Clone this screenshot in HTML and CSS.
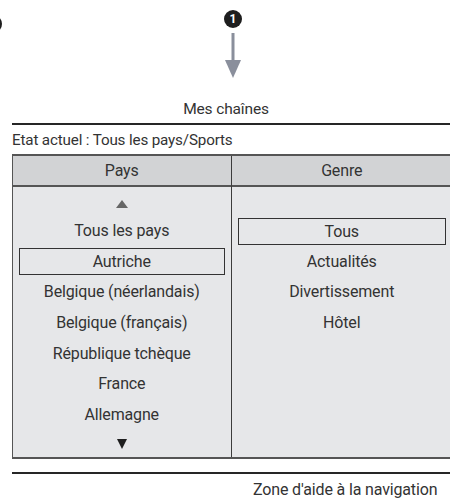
FILE: index.html
```html
<!DOCTYPE html>
<html lang="fr">
<head>
<meta charset="utf-8">
<title>Mes chaînes</title>
<link rel="stylesheet" href="styles.css">
</head>
<body>
<div class="page">
  <div class="badge-edge"></div>
  <div class="pointer">
    <div class="badge">1</div>
    <svg class="arrow" width="18" height="46" viewBox="0 0 18 46">
      <rect x="7.5" y="0" width="3" height="28" fill="#8a8f9c"/>
      <polygon points="1,27 17,27 9,45" fill="#8a8f9c"/>
    </svg>
  </div>
  <div class="title">Mes chaînes</div>
  <div class="frame">
    <div class="status">Etat actuel : Tous les pays/Sports</div>
    <div class="table">
      <div class="col">
        <div class="head">Pays</div>
        <div class="list">
          <div class="row tri"><i class="up"></i></div>
          <div class="row">Tous les pays</div>
          <div class="row sel"><span>Autriche</span></div>
          <div class="row">Belgique (néerlandais)</div>
          <div class="row">Belgique (français)</div>
          <div class="row">République tchèque</div>
          <div class="row">France</div>
          <div class="row">Allemagne</div>
          <div class="row tri dn"><i class="down"></i></div>
        </div>
      </div>
      <div class="col second">
        <div class="head">Genre</div>
        <div class="list">
          <div class="row tri"></div>
          <div class="row sel"><span>Tous</span></div>
          <div class="row">Actualités</div>
          <div class="row">Divertissement</div>
          <div class="row">Hôtel</div>
        </div>
      </div>
    </div>
    <div class="foot">Zone d'aide à la navigation</div>
  </div>
</div>
</body>
</html>
```
FILE: styles.css
```css
* { box-sizing: border-box; }
html, body { margin: 0; padding: 0; background: #fff; }
body {
  width: 450px;
  height: 502px;
  overflow: hidden;
  font-family: Roboto, "Noto Sans", sans-serif;
  color: #333;
  font-size: 16px;
  letter-spacing: -0.15px;
}
.page { position: relative; width: 450px; height: 502px; }
.badge-edge {
  position: absolute;
  left: -16px;
  top: 15px;
  width: 18px;
  height: 18px;
  border-radius: 50%;
  background: #1e1e1e;
}
.pointer {
  display: flex;
  flex-direction: column;
  align-items: center;
  padding-top: 10px;
  margin-left: 16px;
}
.badge {
  width: 18px;
  height: 18px;
  border-radius: 50%;
  background: #1e1e1e;
  color: #fff;
  font-weight: 700;
  font-size: 12px;
  line-height: 18px;
  text-align: center;
  letter-spacing: 0;
}
.arrow { display: block; margin-top: 5px; }
.title {
  text-align: center;
  margin-top: 21px;
  line-height: 18px;
  font-size: 15.5px;
  padding-left: 2px;
}
.frame {
  margin-top: 5px;
  margin-left: 12px;
  width: 450px;
  border-top: 2.5px solid #262626;
}
.status {
  line-height: 18px;
  padding: 6px 0 4.5px;
  font-size: 15.2px;
}
.table {
  display: flex;
  width: 442px;
  height: 305px;
  overflow: hidden;
  border: 2px solid #555;
  border-left-width: 1.5px;
  background: #e6e7e9;
}
.col { width: 217.5px; display: flex; flex-direction: column; }
.col.second { border-left: 1.5px solid #3c3c3c; flex: 1; }
.head {
  height: 31px;
  background: #d2d3d5;
  border-bottom: 2px solid #555;
  text-align: center;
  line-height: 29px;
}
.list { padding: 1.5px 6px 0; }
.row {
  height: 30.67px;
  line-height: 30.67px;
  text-align: center;
}
.row.tri {
  height: 28px;
  display: flex;
  align-items: center;
  justify-content: center;
}
.row.tri.dn { height: 26px; }
.up {
  display: block;
  width: 0;
  height: 0;
  margin-top: 4px;
  border-left: 6.5px solid transparent;
  border-right: 6.5px solid transparent;
  border-bottom: 8.5px solid #666;
}
.down {
  display: block;
  width: 0;
  height: 0;
  margin-top: 1px;
  border-left: 5.5px solid transparent;
  border-right: 5.5px solid transparent;
  border-top: 10.5px solid #1e1e1e;
}
.row.sel {
  display: flex;
  align-items: center;
}
.row.sel span {
  display: block;
  width: 100%;
  height: 27px;
  line-height: 25px;
  border: 1.5px solid #333;
}
.foot {
  margin-top: 13.5px;
  border-top: 2.5px solid #262626;
  padding-left: 241px;
  padding-top: 7px;
  line-height: 18px;
}
```
